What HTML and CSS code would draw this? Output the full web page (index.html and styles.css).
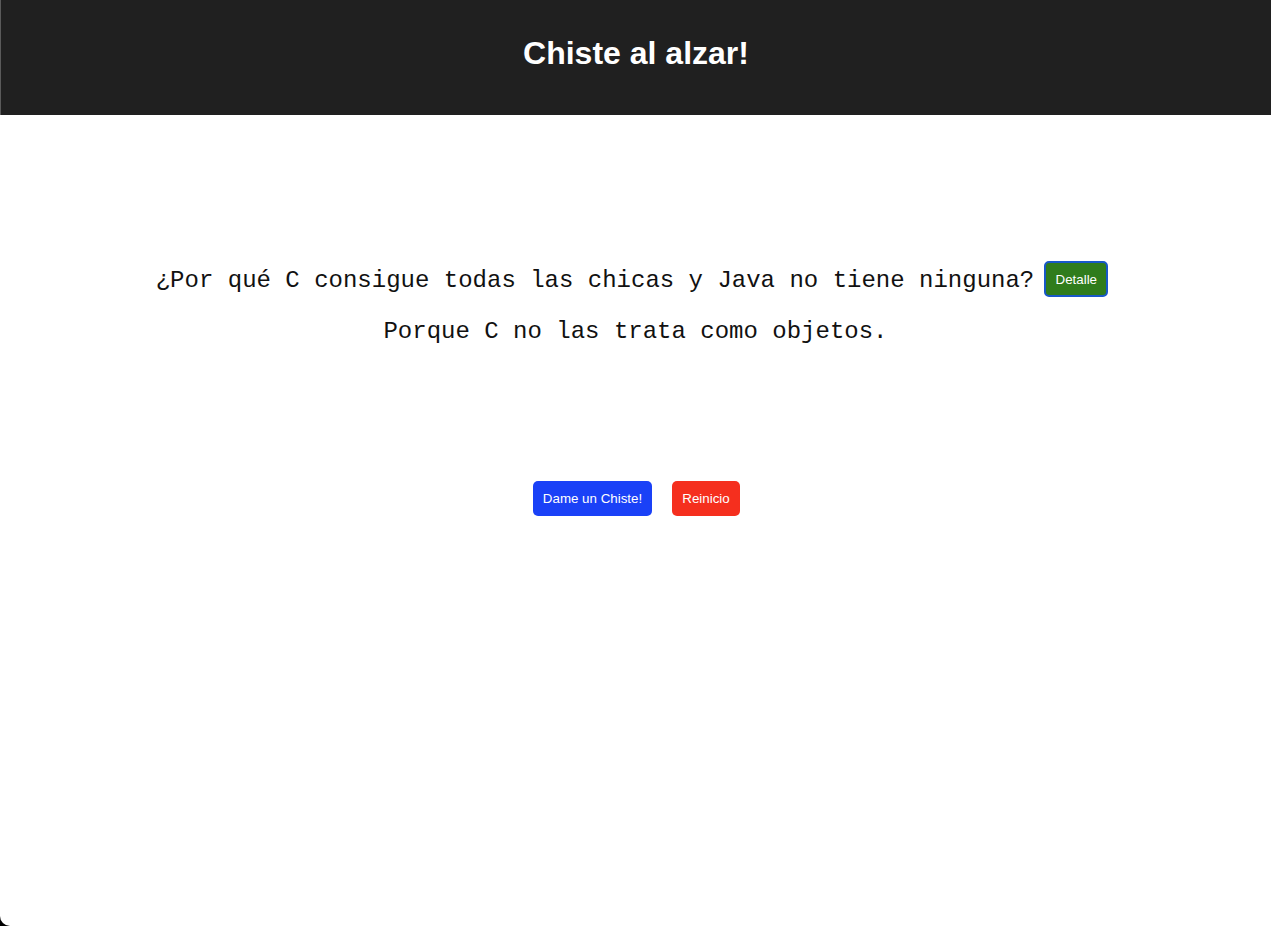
FILE: index.html
```html
<!DOCTYPE html>
<html lang="es">
<head>
<meta charset="utf-8">
<title>Chiste al alzar!</title>
<link rel="stylesheet" href="styles.css">
</head>
<body>
<div class="app">
  <header class="header">
    <h1 class="title">Chiste al alzar!</h1>
  </header>
  <main class="main">
    <section class="joke">
      <div class="joke-row">
        <span class="joke-text question">¿Por qué C consigue todas las chicas y Java no tiene ninguna?</span>
        <button class="btn btn-detail">Detalle</button>
      </div>
      <p class="joke-text answer">Porque C no las trata como objetos.</p>
    </section>
    <div class="actions">
      <button class="btn btn-blue">Dame un Chiste!</button>
      <button class="btn btn-red">Reinicio</button>
    </div>
  </main>
</div>
</body>
</html>
```
FILE: styles.css
```css
html, body {
  margin: 0;
  padding: 0;
  height: 100%;
  background: #000;
}
.app {
  height: 926px;
  background: #fff;
  border-bottom-left-radius: 10px;
  overflow: hidden;
  font-family: "Liberation Sans", Arial, sans-serif;
}
.header {
  height: 115px;
  background: #202020;
  border-left: 1px solid #5a5a5a;
  display: flex;
  align-items: center;
  justify-content: center;
  box-sizing: border-box;
}
.title {
  margin: 0 0 8px 0;
  color: #fff;
  font-size: 32px;
  font-weight: bold;
}
.main {
  display: flex;
  flex-direction: column;
  align-items: center;
  padding-top: 146px;
}
.joke {
  display: flex;
  flex-direction: column;
  align-items: center;
}
.joke-row {
  display: flex;
  align-items: center;
  gap: 10px;
  height: 36px;
  margin-right: 7px;
}
.joke-text {
  font-family: "Liberation Mono", "Courier New", monospace;
  font-size: 24px;
  color: #111;
  line-height: 28px;
}
.question {
  padding-top: 4px;
}
.answer {
  margin: 21px 0 0 0;
}
.btn {
  font-family: "Liberation Sans", Arial, sans-serif;
  color: #fff;
  border: none;
  border-radius: 5px;
  font-size: 13.333px;
  cursor: pointer;
  padding: 0;
}
.btn-detail {
  width: 64px;
  height: 36px;
  background: #2f7c1c;
  border: 2px solid #1858c8;
  border-radius: 5px;
}
.actions {
  display: flex;
  gap: 20px;
  margin-top: 135px;
  margin-left: 2px;
}
.btn-blue {
  width: 119px;
  height: 35px;
  background: #1a41f7;
}
.btn-red {
  width: 68px;
  height: 35px;
  background: #f52f1e;
}
```
